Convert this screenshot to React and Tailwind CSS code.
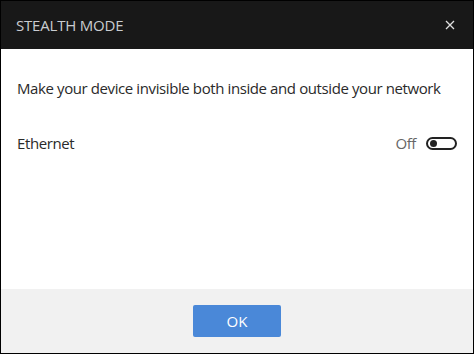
export default function App() {
  return (
    <div
      className="w-[474px] h-[354px] border border-black bg-white flex flex-col"
      style={{ fontFamily: '"Open Sans", "Noto Sans", sans-serif' }}
    >
      <div className="h-[48px] bg-[#181818] flex items-center justify-between pl-[15px] pr-[18px]">
        <span className="text-[15px] text-[#c9ccd0] tracking-[-0.2px]">STEALTH MODE</span>
        <svg width="10" height="10" viewBox="0 0 10 10" className="text-[#e0e0e0]">
          <path d="M1 1 L9 9 M9 1 L1 9" stroke="currentColor" strokeWidth="1.3" />
        </svg>
      </div>

      <div className="flex-1 flex flex-col px-[16px] pt-[29px]">
        <p className="text-[15px] text-[#2a2a2a] tracking-[-0.4px] leading-[20px]">
          Make your device invisible both inside and outside your network
        </p>
        <div className="flex items-center justify-between mt-[35px]">
          <span className="text-[15px] text-[#2a2a2a] tracking-[-0.4px] leading-[20px]">Ethernet</span>
          <div className="flex items-center gap-[10px]">
            <span className="text-[15px] text-[#666] tracking-[-0.4px] leading-[20px]">Off</span>
            <div className="w-[31px] h-[13px] rounded-full border-2 border-[#222] flex items-center pl-[2px]">
              <div className="w-[7px] h-[7px] rounded-full bg-[#222]" />
            </div>
          </div>
        </div>
      </div>

      <div className="h-[64px] bg-[#f1f1f1] flex items-center justify-center">
        <button className="w-[88px] h-[32px] rounded-[2px] bg-[#4a88d8] text-white text-[15px]">
          OK
        </button>
      </div>
    </div>
  );
}
